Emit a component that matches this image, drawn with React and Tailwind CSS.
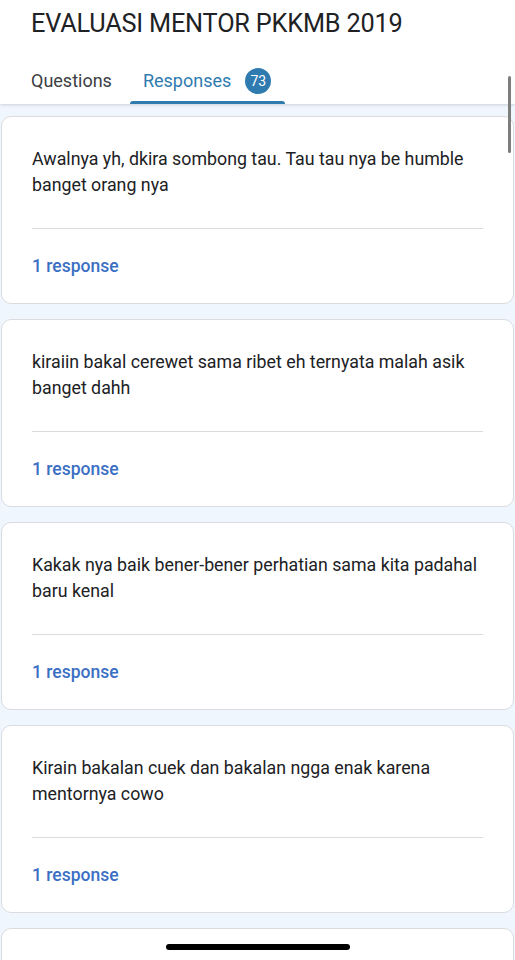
import React from "react";

const responses = [
  "Awalnya yh, dkira sombong tau. Tau tau nya be humble banget orang nya",
  "kiraiin bakal cerewet sama ribet eh ternyata malah asik banget dahh",
  "Kakak nya baik bener-bener perhatian sama kita padahal baru kenal",
  "Kirain bakalan cuek dan bakalan ngga enak karena mentornya cowo",
];

function ResponseCard({ text }) {
  return (
    <div className="bg-white border border-[#dadce0] rounded-[10px] mx-[1px] px-[30px] pt-[29px] pb-[24px]">
      <p className="text-[17.8px] leading-[26px] text-[#202124]">{text}</p>
      <div className="h-px bg-[#dadce0] mt-[30px]" />
      <div className="mt-[24px] text-[17.5px] leading-[26px] font-medium text-[#3b6fc4]">
        1 response
      </div>
    </div>
  );
}

export default function App() {
  return (
    <div
      className="relative w-[515px] h-[960px] overflow-hidden bg-[#f0f6fd]"
      style={{ fontFamily: "Roboto, 'Noto Sans', sans-serif" }}
    >
      <header className="bg-white h-[104px] shadow-[0_1px_3px_rgba(0,0,0,0.15)] relative z-10">
        <h1 className="px-[31px] pt-[8px] text-[25.3px] leading-[32px] text-[#202124] tracking-[-0.2px]">
          EVALUASI MENTOR PKKMB 2019
        </h1>
        <div className="flex items-stretch h-[64px]">
          <div className="pl-[31px] flex items-end pb-[11px] text-[18px] leading-[24px] text-[#3c4043]">
            Questions
          </div>
          <div className="relative flex items-end pb-[11px] ml-[18px] pl-[13px] pr-[14px]">
            <span className="text-[18px] leading-[24px] text-[#2f7bb0]">Responses</span>
            <span className="ml-[14px] w-[26px] h-[26px] rounded-full bg-[#2f7bb0] text-white text-[14px] flex items-center justify-center -mb-[1px]">
              73
            </span>
            <div className="absolute left-0 right-0 bottom-0 h-[3px] bg-[#2f7bb0] rounded-t-[3px]" />
          </div>
        </div>
      </header>

      <div className="flex flex-col gap-[15px] pt-[12px]">
        {responses.map((t, i) => (
          <ResponseCard key={i} text={t} />
        ))}
        <div className="bg-white border border-[#dadce0] rounded-[10px] mx-[1px] h-[60px]" />
      </div>

      <div className="absolute right-[4px] top-[76px] w-[3px] h-[77px] rounded-full bg-[#7d7d7d] z-20" />
      <div className="absolute left-[166px] bottom-[10px] w-[184px] h-[6px] rounded-full bg-black z-20" />
    </div>
  );
}
